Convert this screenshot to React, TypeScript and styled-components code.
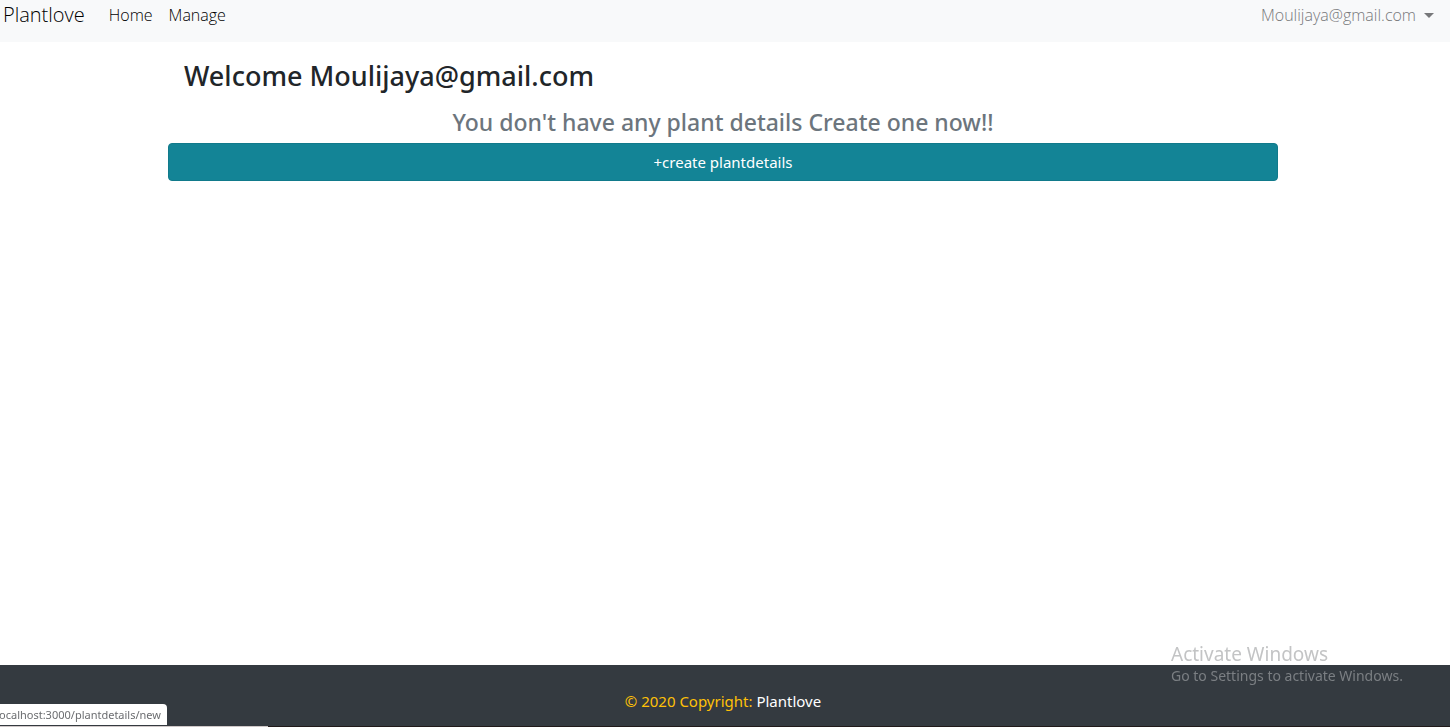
import React from "react";
import styled, { createGlobalStyle } from "styled-components";

const GlobalStyle = createGlobalStyle`
  *, *::before, *::after { box-sizing: border-box; }
  body {
    margin: 0;
    background: #fff;
    color: #212529;
    font-family: "Segoe UI", "Noto Sans", sans-serif;
    font-size: 15px;
    line-height: 24px;
  }
`;

const Page = styled.div`
  min-height: 100vh;
  display: flex;
  flex-direction: column;
`;

const NavBar = styled.nav`
  display: flex;
  align-items: flex-start;
  padding: 3px 16px 15px 3px;
  background: #f8f9fa;
  font-family: "Segoe UI", "Open Sans", sans-serif;
  font-size: 16px;
  font-weight: 300;
`;

const Brand = styled.a`
  margin-right: 24px;
  color: #000;
  font-size: 20px;
  text-decoration: none;
`;

const NavLinks = styled.div`
  display: flex;
  flex: 1;
  gap: 16px;
`;

const NavLink = styled.a`
  color: #000;
  text-decoration: none;
`;

const UserMenu = styled.button`
  display: flex;
  align-items: center;
  gap: 8px;
  padding: 0;
  border: 0;
  background: none;
  color: #77787a;
  font: inherit;
  cursor: pointer;
`;

const Caret = styled.span`
  border: 5px solid transparent;
  border-top-color: currentColor;
  border-bottom: 0;
`;

const Main = styled.main`
  flex: 1;
  width: 100%;
  max-width: 1144px;
  margin: 0 auto;
  padding: 17px 19px 0 15px;
`;

const Title = styled.h3`
  margin: 0 0 14px;
  padding: 0 16px;
  font-size: 27px;
  font-weight: 500;
  line-height: 34px;
`;

const Notice = styled.h4`
  margin: 0 0 6px;
  color: #6c757d;
  font-size: 23px;
  font-weight: 500;
  line-height: 30px;
  text-align: center;
`;

const CreateLink = styled.a`
  display: block;
  padding: 6px 12px;
  border: 1px solid #117a8b;
  border-radius: 4px;
  background: #138496;
  color: #fff;
  text-align: center;
  text-decoration: none;
`;

const Footer = styled.footer`
  padding: 24px 4px 13px 0;
  background: #343a40;
  color: #ffc107;
  text-align: center;
`;

const FooterLink = styled.a`
  color: #fff;
  text-decoration: none;
`;

const BottomEdge = styled.div`
  height: 1px;
  background: linear-gradient(to right, #cfc8c8 268px, #211a1a 268px);
`;

const LinkStatus = styled.div`
  position: fixed;
  left: 0;
  bottom: 2px;
  width: 167px;
  overflow: hidden;
  display: flex;
  justify-content: flex-end;
  padding-right: 6px;
  border-radius: 0 4px 0 0;
  background: #fff;
  color: #6b6d70;
  font-size: 11px;
  line-height: 21px;
  white-space: nowrap;
`;

const Watermark = styled.aside`
  position: fixed;
  right: 43px;
  bottom: 41px;
  width: 236px;
  color: #c3c4c5;
  font-size: 19px;
  line-height: 24px;
  white-space: nowrap;
`;

const WatermarkNote = styled.div`
  color: #7b7f83;
  font-size: 14px;
  line-height: 20px;
`;

export default function App() {
  return (
    <Page>
      <GlobalStyle />
      <NavBar>
        <Brand href="#">Plantlove</Brand>
        <NavLinks>
          <NavLink href="#home">Home</NavLink>
          <NavLink href="#manage">Manage</NavLink>
        </NavLinks>
        <UserMenu type="button" aria-haspopup="menu">
          Moulijaya@gmail.com
          <Caret />
        </UserMenu>
      </NavBar>
      <Main>
        <Title>Welcome Moulijaya@gmail.com</Title>
        <Notice>You don't have any plant details Create one now!!</Notice>
        <CreateLink href="#new">+create plantdetails</CreateLink>
      </Main>
      <Footer>
        © 2020 Copyright: <FooterLink href="#">Plantlove</FooterLink>
      </Footer>
      <BottomEdge />
      <LinkStatus>ocalhost:3000/plantdetails/new</LinkStatus>
      <Watermark>
        Activate Windows
        <WatermarkNote>Go to Settings to activate Windows.</WatermarkNote>
      </Watermark>
    </Page>
  );
}
